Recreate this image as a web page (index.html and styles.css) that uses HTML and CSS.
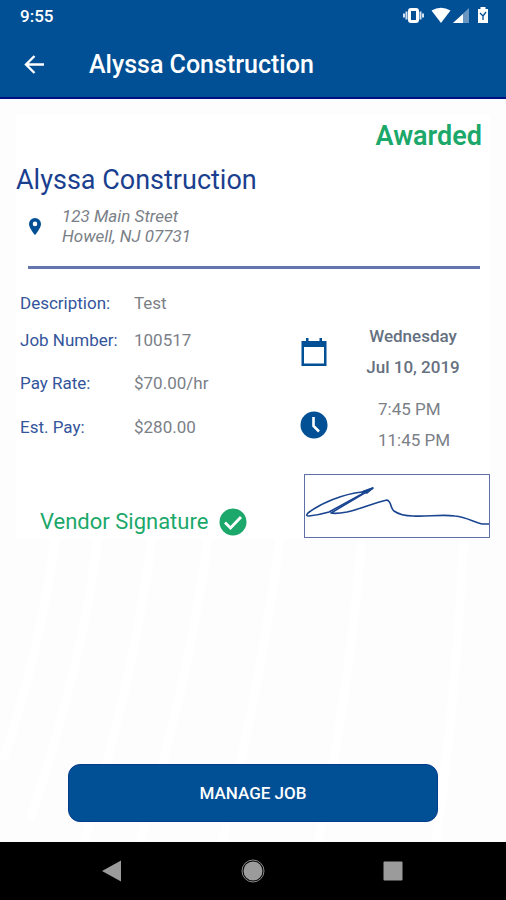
FILE: index.html
```html
<!DOCTYPE html>
<html lang="en">
<head>
    <meta charset="UTF-8">
    <meta name="viewport" content="width=device-width, initial-scale=1.0">
    <title>Alyssa Construction</title>
    <link rel="stylesheet" href="styles.css">
</head>
<body>

    <header class="header">
        <div class="status-bar">
            <span class="time">9:55</span>
            <svg class="status-icons" width="86" height="18" viewBox="0 0 86 18">
                <rect x="5" y="1" width="11" height="15" rx="3" fill="#fff"/>
                <rect x="8" y="4" width="5" height="9" fill="#014f95"/>
                <path d="M3.500 4.500v8M17.500 4.500v8M1 6.500v4M20 6.500v4" stroke="#d5e3f1" stroke-width="2"/>
                <path d="M28.500 3.500Q38 -2 47.500 3.500L38 16z" fill="#fff"/>
                <path d="M66 1v15H50z" fill="#6a97c2"/>
                <path d="M60 7v9H50z" fill="#fff"/>
                <path d="M75 2h2.500V0h5v2H85v14H75V2z" fill="#fff"/>
                <path d="M77 6l3 3L83 5M80 8v5" stroke="#014f95" stroke-width="1.300" fill="none"/>
            </svg>
        </div>
        <div class="app-bar">
            <button class="back" aria-label="Back">
                <svg width="22" height="20" viewBox="0 0 22 20">
                    <path d="M20 9.500H2M10.500 1L2 9.500l8.500 8.500" fill="none" stroke="#fff" stroke-width="2.400"/>
                </svg>
            </button>
            <h1>Alyssa Construction</h1>
        </div>
    </header>

    <main class="job">
        <svg class="stripes" viewBox="0 0 506 742" preserveAspectRatio="none" aria-hidden="true">
            <g fill="none" stroke="#fff" stroke-width="9">
                <path d="M56 436Q38 560 3 660"/>
                <path d="M98 436Q84 560 30 720"/>
                <path d="M152 436Q134 580 84 742"/>
                <path d="M208 436Q190 580 140 742"/>
                <path d="M280 436Q262 580 222 742"/>
                <path d="M362 436Q350 590 318 742"/>
                <path d="M464 436Q456 600 436 742"/>
            </g>
        </svg>

        <p class="status">Awarded</p>
        <h2>Alyssa Construction</h2>

        <div class="address">
            <svg width="12" height="17" viewBox="0 0 12 17">
                <path fill-rule="evenodd" fill="#014f95" d="M6 0a6 6 0 0 0-6 6c0 4.300 6 11 6 11s6-6.700 6-11a6 6 0 0 0-6-6zm0 3.600a2.300 2.300 0 1 1 0 4.600 2.300 2.300 0 0 1 0-4.600z"/>
            </svg>
            <address>123 Main Street<br>Howell, NJ 07731</address>
        </div>

        <hr>

        <div class="details">
            <dl class="info">
                <dt>Description:</dt>
                <dd>Test</dd>
                <dt>Job Number:</dt>
                <dd>100517</dd>
                <dt>Pay Rate:</dt>
                <dd>$70.00/hr</dd>
                <dt>Est. Pay:</dt>
                <dd>$280.00</dd>
            </dl>

            <div class="schedule">
                <svg width="28" height="28" viewBox="0 0 28 28">
                    <path fill="#014f95" fill-rule="evenodd" d="M1.500 3H6V0h2.500v3h11V0H22v3h4.500v25h-25zM4 9v16.500h20V9z"/>
                </svg>
                <div class="date">Wednesday<br>Jul 10, 2019</div>
                <svg width="28" height="28" viewBox="0 0 28 28">
                    <circle cx="14" cy="14" r="13.500" fill="#014f95"/>
                    <path d="M13.500 6v9l5.500 5.500" fill="none" stroke="#fff" stroke-width="2.600"/>
                </svg>
                <div class="hours">7:45 PM<br>11:45 PM</div>
            </div>
        </div>

        <div class="signature">
            <p>
                Vendor Signature
                <svg width="28" height="28" viewBox="0 0 28 28">
                    <circle cx="14" cy="14" r="13.500" fill="#1ba86a"/>
                    <path d="M6 14.500l5.500 5.500L22 9" fill="none" stroke="#fff" stroke-width="2.800"/>
                </svg>
            </p>
            <div class="signature-box">
                <svg viewBox="0 0 184 62" fill="none" stroke="#1a4590" stroke-width="1.600" stroke-linejoin="round">
                    <path d="M68 13L57 17C38 19 16 28 3 38Q0 41 4 41Q14 40 24 37L68 13"/>
                    <path d="M68 13L26 38Q31 39 42 37C56 34 68 28 82 25C87 27 85 33 89 36Q96 41 108 41C122 42 136 39 150 41C162 42 170 48 178 49H184"/>
                    <path d="M68 13L57 17L62 18Z" fill="#1a4590"/>
                </svg>
            </div>
        </div>

        <button class="manage">MANAGE JOB</button>
    </main>

    <nav class="nav-bar">
        <button aria-label="Back">
            <svg width="24" height="24" viewBox="0 0 24 24"><path d="M20 1.500v21L1 12z" fill="#9b9b9b"/></svg>
        </button>
        <button aria-label="Home">
            <svg width="24" height="24" viewBox="0 0 24 24">
                <circle cx="12" cy="12" r="9.500" fill="#9b9b9b"/>
                <circle cx="12" cy="12" r="11" fill="none" stroke="#8a8a8a" stroke-width="1"/>
            </svg>
        </button>
        <button aria-label="Recent apps">
            <svg width="24" height="24" viewBox="0 0 24 24"><rect x="2.500" y="2.500" width="19" height="19" rx="1" fill="#9b9b9b"/></svg>
        </button>
    </nav>

</body>
</html>
```
FILE: styles.css
```css
* {
    box-sizing: border-box;
}
body {
    margin: 0;
    min-height: 100vh;
    display: flex;
    flex-direction: column;
    font-family: Roboto, "Liberation Sans", sans-serif;
    font-size: 17px;
    line-height: 20px;
    color: #7b8087;
    background-color: #fdfdfd;
}
h1, h2, p, dl, dd {
    margin: 0;
}
svg {
    display: block;
}
button {
    border: none;
    padding: 0;
    background: none;
    font-family: inherit;
    cursor: pointer;
}
.header {
    background-color: #014f95;
    border-bottom: 2px solid #000f80;
    color: white;
}
.status-bar {
    display: flex;
    align-items: center;
    justify-content: space-between;
    height: 32px;
    padding: 0 17px 0 20px;
}
.time {
    font-weight: 500;
}
.app-bar {
    display: flex;
    align-items: center;
    gap: 31px;
    height: 65px;
    padding: 0 24px;
}
.back {
    width: 34px;
}
h1 {
    font-size: 25px;
    line-height: 32px;
    font-weight: 500;
}
.job {
    position: relative;
    flex: 1;
    display: flex;
    flex-direction: column;
    padding: 21px 16px 20px;
    background: linear-gradient(to right, transparent 16px, white 16px, white 490px, transparent 490px) no-repeat 0 16px / 100% 424px;
}
.stripes {
    position: absolute;
    z-index: -1;
    top: 0;
    left: 0;
    width: 100%;
    height: 100%;
}
.status {
    padding-right: 8px;
    text-align: right;
    font-size: 27px;
    line-height: 32px;
    font-weight: 600;
    color: #1ba86a;
}
h2 {
    margin-top: 12px;
    font-size: 27px;
    line-height: 32px;
    font-weight: 400;
    color: #1b3f8f;
}
.address {
    display: flex;
    align-items: center;
    gap: 21px;
    margin-top: 10px;
    padding-left: 13px;
}
hr {
    width: auto;
    height: 3px;
    margin: 20px 10px 24px 12px;
    border: none;
    background-color: #6476ad;
}
.details {
    display: grid;
    grid-template-columns: 1fr 190px;
    padding-left: 4px;
}
.info {
    display: grid;
    grid-template-columns: 114px 1fr;
    grid-template-rows: 37px 43px 44px 20px;
}
dt {
    color: #34549b;
}
.schedule {
    display: grid;
    grid-template-columns: 28px 1fr;
    align-items: center;
    gap: 11px 8px;
    padding-top: 28px;
    line-height: 31px;
}
.date {
    text-align: center;
    font-weight: 500;
    color: #657080;
}
.hours {
    padding-left: 42px;
}
.signature {
    display: grid;
    grid-template-columns: 1fr 186px;
    align-items: center;
    margin-top: 18px;
    padding-left: 24px;
}
.signature p {
    display: flex;
    align-items: center;
    gap: 11px;
    padding-top: 31px;
    font-size: 22px;
    line-height: 28px;
    color: #1ba86a;
}
.signature-box {
    border: 1px solid #5f70a8;
    background-color: white;
}
.manage {
    width: 78%;
    height: 58px;
    margin: auto auto 0;
    border-radius: 12px;
    border: 1px solid #033c8c;
    background-color: #014f95;
    color: white;
    font-size: 17px;
    font-weight: 500;
}
.nav-bar {
    display: flex;
    justify-content: center;
    gap: 116px;
    padding: 17px 0;
    background-color: black;
}
```
